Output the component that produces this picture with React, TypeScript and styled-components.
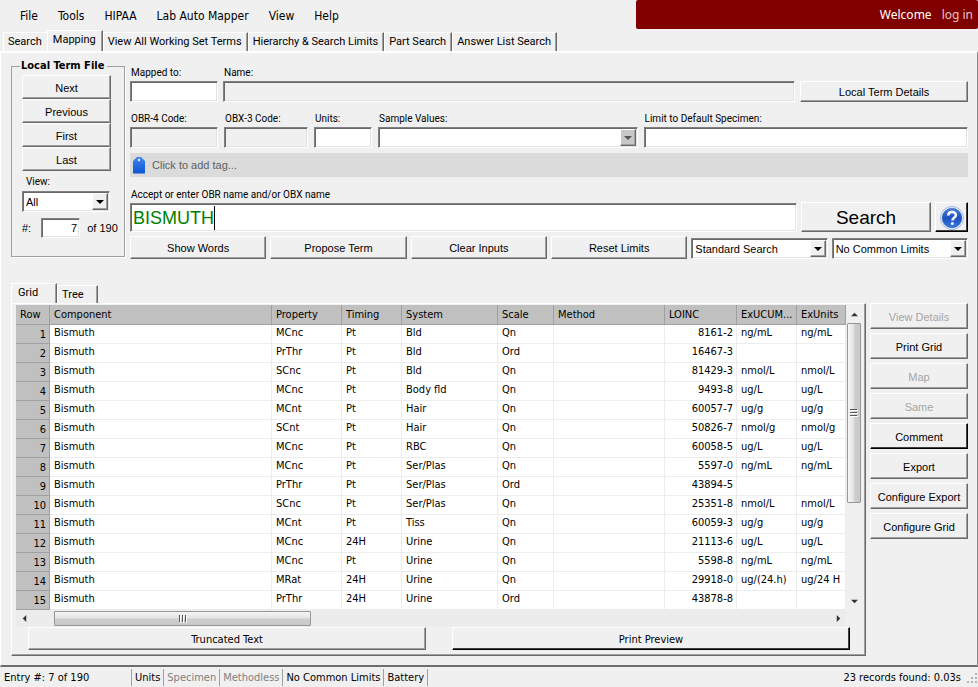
import React from "react";
import styled, { createGlobalStyle, css } from "styled-components";

const tahoma = `"DejaVu Sans Condensed", "Noto Sans", sans-serif`;
const arial = `"Liberation Sans", Arial, sans-serif`;
const narrow = `Roboto, "Liberation Sans", sans-serif`;

const GlobalStyle = createGlobalStyle`
  * { box-sizing: border-box; }
  body { margin: 0; background: #f0f0f0; color: #000; font-family: ${tahoma}; font-size: 11px; }
  button, input, select { font: inherit; color: inherit; margin: 0; border-radius: 0; }
`;

const raised = css`
  border: 1px solid;
  border-color: #fff #696969 #696969 #fff;
  box-shadow: inset -1px -1px #a0a0a0;
`;

const sunken = css`
  border: 1px solid;
  border-color: #808080 #fff #fff #808080;
  box-shadow: inset 1px 1px #696969, inset -1px -1px #e3e3e3;
`;

const Page = styled.div`
  display: flex;
  flex-direction: column;
  min-height: 100vh;
`;

const TopBar = styled.header`
  display: flex;
  justify-content: space-between;
  align-items: flex-start;
`;

const Menu = styled.nav`
  display: flex;
  gap: 20px;
  padding: 7px 0 0 20px;
`;

const MenuItem = styled.button`
  border: 0;
  padding: 0;
  background: none;
  font-family: ${tahoma};
  font-size: 12px;
  line-height: 18px;
`;

const Banner = styled.div`
  display: flex;
  justify-content: flex-end;
  gap: 10px;
  width: 35%;
  height: 29px;
  padding-right: 5px;
  border-radius: 2px;
  background: #800000;
  color: #fff;
  font: 12px/30px "Noto Sans", sans-serif;
`;

const LoginLink = styled.a`
  color: #e0c4c4;
  text-decoration: none;
`;

const TabStrip = styled.div`
  display: flex;
  align-items: flex-end;
  height: 22px;
  padding-left: 3px;
`;

const Tab = styled.button<{ $active?: boolean; $open?: boolean }>`
  height: ${(p) => (p.$active ? 21 : 19)}px;
  padding: ${(p) => (p.$active ? "0 6px 2px 5px" : "0 5px 0 4px")};
  border: solid;
  border-width: 1px ${(p) => (p.$open ? 0 : 1)}px 0 1px;
  border-color: #fff #696969 #fff #fff;
  box-shadow: ${(p) => (p.$open ? "none" : "inset -1px 0 #a0a0a0")};
  background: #f0f0f0;
  font-family: ${narrow};
  font-size: 11px;
  line-height: 16px;
  white-space: nowrap;
`;

const MainPanel = styled.main`
  flex: 1;
  display: flex;
  flex-direction: column;
  border: solid;
  border-width: 2px 1px 2px 1px;
  border-color: #fff #8a8a8a #6d6d6d #fff;
  padding: 5px 9px 9px 10px;
`;

const FormArea = styled.div`
  display: flex;
  gap: 5px;
`;

const TermFile = styled.fieldset`
  flex: none;
  width: 114px;
  height: 199px;
  margin: 0;
  padding: 1px 0 0 10px;
  border: 1px solid #a0a0a0;
  box-shadow: 1px 1px #fff;
`;

const TermLegend = styled.legend`
  padding: 0 3px 0 1px;
  margin-left: -2px;
  font: bold 11px/16px ${tahoma};
`;

const NavButtons = styled.div`
  display: flex;
  flex-direction: column;
  width: 89px;
`;

const PushButton = styled.button<{ $h?: number; $strong?: boolean; $size?: number; $face?: string }>`
  ${raised}
  height: ${(p) => p.$h ?? 23}px;
  padding: 1px 0 0;
  background: #f0f0f0;
  font-family: ${(p) => p.$face ?? arial};
  font-size: ${(p) => p.$size ?? 11}px;
  white-space: nowrap;
  ${(p) => p.$strong && "border-right-color: #000; border-bottom-color: #000; box-shadow: inset -1px -1px #404040;"}
  &:disabled { color: #a5a5a5; }
`;

const SmallLabel = styled.label`
  display: block;
  font: 10px/12px ${narrow};
  padding-left: 1px;
  white-space: nowrap;
`;

const ViewField = styled.div`
  width: 88px;
  padding-top: 5px;
`;

const ViewLabel = styled(SmallLabel)`
  padding: 0 0 3px 4px;
`;

const CountRow = styled.div`
  display: flex;
  align-items: center;
  padding-top: 6px;
  font: 11px/18px ${arial};
  white-space: nowrap;
`;

const CountInput = styled.input`
  ${sunken}
  width: 39px;
  height: 20px;
  margin: 0 7px 0 10px;
  padding: 0 2px;
  background: #fff;
  text-align: right;
`;

const Fields = styled.div`
  flex: 1;
  min-width: 0;
  display: flex;
  flex-direction: column;
  padding-top: 9px;
`;

const FieldRow = styled.div<{ $cols: string; $gap: number; $top: number }>`
  display: grid;
  grid-template-columns: ${(p) => p.$cols};
  column-gap: ${(p) => p.$gap}px;
  padding-top: ${(p) => p.$top}px;
  align-items: end;
`;

const Field = styled.div`
  min-width: 0;
`;

const FieldLabel = styled(SmallLabel)`
  padding-bottom: 2px;
`;

const TextInput = styled.input`
  ${sunken}
  display: block;
  width: 100%;
  height: 21px;
  padding: 0 2px;
  background: #fff;
  &:read-only { background: #f0f0f0; }
`;

const SelectFrame = styled.div`
  position: relative;
  ${sunken}
  height: 21px;
  padding: 2px 1px 1px 2px;
  background: #fff;
`;

const SelectInput = styled.select`
  appearance: none;
  display: block;
  width: 100%;
  height: 16px;
  padding: 0 18px 0 1px;
  border: 0;
  background: #fff;
  font: 11px/16px ${arial};
`;

const SelectArrow = styled.span<{ $muted?: boolean }>`
  ${raised}
  position: absolute;
  top: 1px;
  right: 1px;
  width: 16px;
  height: 17px;
  display: flex;
  align-items: center;
  justify-content: center;
  background: ${(p) => (p.$muted ? "#c8c8c8" : "#f0f0f0")};
  color: ${(p) => (p.$muted ? "#555" : "#000")};
  pointer-events: none;
`;

const TagBar = styled.button`
  display: flex;
  align-items: center;
  gap: 7px;
  height: 24px;
  margin-top: 5px;
  padding: 0 3px;
  border: 0;
  background: #dbdbdb;
  color: #606060;
  font: 11px/24px ${arial};
`;

const NameBox = styled.div`
  ${sunken}
  display: flex;
  align-items: center;
  height: 29px;
  padding-left: 2px;
  background: #fff;
`;

const NameInput = styled.input`
  field-sizing: content;
  min-width: 4px;
  padding: 0;
  border: 0;
  outline: 0;
  background: none;
  color: #008000;
  caret-color: transparent;
  font: 18px/24px ${arial};
`;

const Caret = styled.span`
  width: 1px;
  height: 24px;
  background: #000;
`;

const HelpButton = styled(PushButton)`
  display: flex;
  align-items: center;
  justify-content: center;
`;

const Results = styled.div`
  flex: 1;
  display: flex;
  gap: 4px;
  padding-top: 24px;
`;

const ResultsLeft = styled.div`
  flex: 1;
  min-width: 0;
  display: flex;
  flex-direction: column;
`;

const GridTabs = styled(TabStrip)`
  height: 20px;
  padding-left: 0;
`;

const GridTab = styled(Tab)`
  height: ${(p) => (p.$active ? 20 : 18)}px;
  padding: ${(p) => (p.$active ? "0 18px 2px 6px" : "0 13px 0 4px")};
`;

const GridPanel = styled.section`
  flex: 1;
  border: 1px solid;
  border-color: #fff #696969 #696969 #fff;
  box-shadow: inset -1px -1px #a0a0a0;
  padding: 1px 3px 4px 4px;
`;

const TableArea = styled.div`
  display: flex;
`;

const DataTable = styled.table`
  flex: 1;
  width: 100%;
  min-width: 0;
  table-layout: fixed;
  border-collapse: separate;
  border-spacing: 0;
  background: #fff;
  line-height: 16px;
`;

const Col = styled.col<{ $w?: number }>`
  width: ${(p) => (p.$w ? `${p.$w}px` : "auto")};
`;

const HeadCell = styled.th`
  height: 20px;
  padding: 0 0 0 4px;
  border: solid #a0a0a0;
  border-width: 0 1px 1px 0;
  background: #c0c0c0;
  font-weight: normal;
  text-align: left;
  white-space: nowrap;
`;

const RowHead = styled.th`
  height: 19px;
  padding: 2px 3px 0 0;
  border: solid #a0a0a0;
  border-width: 0 1px 1px 0;
  background: #c0c0c0;
  font-weight: normal;
  text-align: right;
`;

const Cell = styled.td<{ $right?: boolean }>`
  height: 19px;
  padding: 0 3px 2px 4px;
  border: solid #ececec;
  border-width: 0 1px 1px 0;
  text-align: ${(p) => (p.$right ? "right" : "left")};
  white-space: nowrap;
`;

const ScrollV = styled.div`
  flex: none;
  display: flex;
  flex-direction: column;
  align-items: center;
  width: 16px;
  background: #efefef;
`;

const ScrollH = styled.div`
  display: flex;
  align-items: center;
  height: 17px;
  margin-right: 16px;
  background: #ececec;
`;

const ArrowCell = styled.span`
  flex: none;
  width: 16px;
  height: 18px;
  display: flex;
  align-items: center;
  justify-content: center;
  color: #333;
`;

const ThumbV = styled.div`
  display: flex;
  align-items: center;
  justify-content: center;
  width: 14px;
  height: 180px;
  margin-bottom: auto;
  border: 1px solid #979797;
  border-radius: 1px;
  background: linear-gradient(90deg, #f5f5f5, #e3e3e3 48%, #cfcfcf 52%, #c8c8cc);
`;

const ThumbH = styled.div`
  display: flex;
  align-items: center;
  justify-content: center;
  width: 31%;
  height: 15px;
  margin: 0 auto 0 22px;
  border: 1px solid #979797;
  border-radius: 1px;
  background: linear-gradient(#f5f5f5, #e3e3e3 48%, #cfcfcf 52%, #c8c8cc);
`;

const GridActions = styled.div`
  display: grid;
  grid-template-columns: 1fr 1fr;
  gap: 26px;
  padding: 0 12px;
`;

const SideActions = styled.div`
  flex: none;
  display: flex;
  flex-direction: column;
  gap: 4px;
  width: 98px;
  padding-top: 20px;
`;

const StatusBar = styled.footer`
  display: flex;
  align-items: center;
  height: 20px;
  padding: 1px 0 0 1px;
  line-height: 18px;
`;

const StatusItem = styled.span<{ $w?: number; $dim?: boolean }>`
  height: 17px;
  width: ${(p) => (p.$w ? `${p.$w}px` : "auto")};
  padding: 0 3px;
  border-right: 1px solid #a0a0a0;
  color: ${(p) => (p.$dim ? "#808080" : "#000")};
  white-space: nowrap;
`;

const StatusResult = styled.span`
  margin-left: auto;
  padding-right: 5px;
`;

type Dir = "up" | "down" | "left" | "right";
const arrowPaths: Record<Dir, string> = {
  up: "M0 6 4 2 8 6z",
  down: "M0 2h8L4 6z",
  left: "M6 0v8L2 4z",
  right: "M2 0v8l4-4z",
};

const Arrow = ({ dir, size = 7 }: { dir: Dir; size?: number }) => (
  <svg width={size} height={size} viewBox="0 0 8 8" aria-hidden="true">
    <path d={arrowPaths[dir]} fill="currentColor" />
  </svg>
);

const GripV = () => (
  <svg width="8" height="8" viewBox="0 0 8 8" aria-hidden="true">
    <path d="M0 .5h7M0 3.5h7M0 6.5h7" stroke="#555" />
    <path d="M1 1.5h7M1 4.5h7M1 7.5h7" stroke="#fff" />
  </svg>
);

const GripH = () => (
  <svg width="8" height="8" viewBox="0 0 8 8" aria-hidden="true">
    <path d="M.5 0v7M3.5 0v7M6.5 0v7" stroke="#555" />
    <path d="M1.5 1v7M4.5 1v7M7.5 1v7" stroke="#fff" />
  </svg>
);

const TagIcon = () => (
  <svg width="12" height="17" viewBox="0 0 12 17" aria-hidden="true">
    <defs>
      <linearGradient id="tagBlue" x1="0" y1="0" x2="0" y2="1">
        <stop offset="0" stopColor="#4186ee" />
        <stop offset="1" stopColor="#0b55d0" />
      </linearGradient>
    </defs>
    <path d="M4 0h4l4 4v12.500H0V4z" fill="url(#tagBlue)" />
    <circle cx="6" cy="3" r="1.300" fill="#dfeaff" />
  </svg>
);

const HelpIcon = () => (
  <svg width="24" height="24" viewBox="0 0 24 24" aria-hidden="true">
    <defs>
      <linearGradient id="helpBlue" x1="0" y1="0" x2="0" y2="1">
        <stop offset="0" stopColor="#4a83dd" />
        <stop offset=".5" stopColor="#1c50bd" />
        <stop offset="1" stopColor="#3a7be6" />
      </linearGradient>
    </defs>
    <circle cx="12" cy="12" r="11.500" fill="#f4f8ff" stroke="#9bb6e6" />
    <circle cx="12" cy="12" r="9.800" fill="url(#helpBlue)" stroke="#2450a8" strokeWidth=".6" />
    <path d="M8.300 9.400c0-4.600 7.600-4.500 7.600-.3 0 2.700-3.500 2.700-3.500 5.400" fill="none" stroke="#fff" strokeWidth="2.500" />
    <circle cx="12.300" cy="17.500" r="1.500" fill="#fff" />
  </svg>
);

const SizeGrip = () => (
  <svg width="12" height="12" viewBox="0 0 12 12" aria-hidden="true">
    <path
      d="M9 1h2v2H9zM9 5h2v2H9zM9 9h2v2H9zM5 5h2v2H5zM5 9h2v2H5zM1 9h2v2H1z"
      fill="#b4b4b4"
    />
  </svg>
);

const Dropdown = ({ id, label, value, muted }: { id: string; label?: string; value?: string; muted?: boolean }) => (
  <SelectFrame>
    <SelectInput id={id} aria-label={label} defaultValue={value ?? ""}>
      <option value={value ?? ""}>{value ?? ""}</option>
    </SelectInput>
    <SelectArrow $muted={muted}>
      <Arrow dir="down" size={8} />
    </SelectArrow>
  </SelectFrame>
);

const LabeledInput = ({ id, label, readOnly }: { id: string; label: string; readOnly?: boolean }) => (
  <Field>
    <FieldLabel htmlFor={id}>{label}</FieldLabel>
    <TextInput id={id} type="text" readOnly={readOnly} />
  </Field>
);

const menus = ["File", "Tools", "HIPAA", "Lab Auto Mapper", "View", "Help"];
const tabs = ["Search", "Mapping", "View All Working Set Terms", "Hierarchy & Search Limits", "Part Search", "Answer List Search"];
const columns: [string, number?][] = [
  ["Row", 34], ["Component"], ["Property", 70], ["Timing", 60], ["System", 96],
  ["Scale", 56], ["Method", 111], ["LOINC", 72], ["ExUCUM...", 60], ["ExUnits", 49],
];
const rows = [
  ["MCnc", "Pt", "Bld", "Qn", "8161-2", "ng/mL", "ng/mL"],
  ["PrThr", "Pt", "Bld", "Ord", "16467-3", "", ""],
  ["SCnc", "Pt", "Bld", "Qn", "81429-3", "nmol/L", "nmol/L"],
  ["MCnc", "Pt", "Body fld", "Qn", "9493-8", "ug/L", "ug/L"],
  ["MCnt", "Pt", "Hair", "Qn", "60057-7", "ug/g", "ug/g"],
  ["SCnt", "Pt", "Hair", "Qn", "50826-7", "nmol/g", "nmol/g"],
  ["MCnc", "Pt", "RBC", "Qn", "60058-5", "ug/L", "ug/L"],
  ["MCnc", "Pt", "Ser/Plas", "Qn", "5597-0", "ng/mL", "ng/mL"],
  ["PrThr", "Pt", "Ser/Plas", "Ord", "43894-5", "", ""],
  ["SCnc", "Pt", "Ser/Plas", "Qn", "25351-8", "nmol/L", "nmol/L"],
  ["MCnt", "Pt", "Tiss", "Qn", "60059-3", "ug/g", "ug/g"],
  ["MCnc", "24H", "Urine", "Qn", "21113-6", "ug/L", "ug/L"],
  ["MCnc", "Pt", "Urine", "Qn", "5598-8", "ng/mL", "ng/mL"],
  ["MRat", "24H", "Urine", "Qn", "29918-0", "ug/(24.h)", "ug/24 H"],
  ["PrThr", "24H", "Urine", "Ord", "43878-8", "", ""],
];
const sideActions = [
  { label: "View Details", disabled: true },
  { label: "Print Grid" },
  { label: "Map", disabled: true },
  { label: "Same", disabled: true },
  { label: "Comment", strong: true },
  { label: "Export" },
  { label: "Configure Export" },
  { label: "Configure Grid" },
];

export default function App() {
  const [name, setName] = React.useState("BISMUTH");
  return (
    <Page>
      <GlobalStyle />
      <TopBar>
        <Menu>
          {menus.map((m) => (
            <MenuItem key={m}>{m}</MenuItem>
          ))}
        </Menu>
        <Banner>
          <span>Welcome</span>
          <LoginLink href="#login">log in</LoginLink>
        </Banner>
      </TopBar>
      <TabStrip role="tablist">
        {tabs.map((t) => (
          <Tab key={t} role="tab" aria-selected={t === "Mapping"} $active={t === "Mapping"} $open={t === "Search"}>{t}</Tab>
        ))}
      </TabStrip>
      <MainPanel>
        <FormArea>
          <TermFile>
            <TermLegend>Local Term File</TermLegend>
            <NavButtons>
              {["Next", "Previous", "First", "Last"].map((b) => (
                <PushButton key={b} $h={24}>{b}</PushButton>
              ))}
            </NavButtons>
            <ViewField>
              <ViewLabel htmlFor="view">View:</ViewLabel>
              <Dropdown id="view" value="All" />
            </ViewField>
            <CountRow>
              <label htmlFor="entry">#:</label>
              <CountInput id="entry" type="text" defaultValue="7" />
              <span>of 190</span>
            </CountRow>
          </TermFile>
          <Fields>
            <FieldRow $cols="88px 1fr 168px" $gap={5} $top={0}>
              <LabeledInput id="mapped" label="Mapped to:" />
              <LabeledInput id="name" label="Name:" readOnly />
              <PushButton $h={21}>Local Term Details</PushButton>
            </FieldRow>
            <FieldRow $cols="88px 84px 58px 260fr 325fr" $gap={6} $top={11}>
              <LabeledInput id="obr" label="OBR-4 Code:" readOnly />
              <LabeledInput id="obx" label="OBX-3 Code:" readOnly />
              <LabeledInput id="units" label="Units:" />
              <Field>
                <FieldLabel htmlFor="samples">Sample Values:</FieldLabel>
                <Dropdown id="samples" muted />
              </Field>
              <LabeledInput id="specimen" label="Limit to Default Specimen:" />
            </FieldRow>
            <TagBar>
              <TagIcon />
              Click to add tag...
            </TagBar>
            <FieldRow $cols="1fr 130px 33px" $gap={4} $top={12}>
              <Field>
                <FieldLabel htmlFor="obname">Accept or enter OBR name and/or OBX name</FieldLabel>
                <NameBox>
                  <NameInput id="obname" type="text" value={name} onChange={(e) => setName(e.target.value)} />
                  <Caret />
                </NameBox>
              </Field>
              <PushButton $h={30} $size={19}>Search</PushButton>
              <HelpButton $h={30} $strong aria-label="Help"><HelpIcon /></HelpButton>
            </FieldRow>
            <FieldRow $cols="repeat(6, 1fr)" $gap={4} $top={4}>
              <PushButton>Show Words</PushButton>
              <PushButton>Propose Term</PushButton>
              <PushButton>Clear Inputs</PushButton>
              <PushButton>Reset Limits</PushButton>
              <Dropdown id="mode" label="Search mode" value="Standard Search" />
              <Dropdown id="limits" label="Common limits" value="No Common Limits" />
            </FieldRow>
          </Fields>
        </FormArea>
        <Results>
          <ResultsLeft>
            <GridTabs role="tablist">
              <GridTab role="tab" aria-selected $active>Grid</GridTab>
              <GridTab role="tab">Tree</GridTab>
            </GridTabs>
            <GridPanel>
              <TableArea>
                <DataTable>
                  <colgroup>
                    {columns.map(([c, w]) => <Col key={c} $w={w} />)}
                  </colgroup>
                  <thead>
                    <tr>{columns.map(([c]) => <HeadCell key={c} scope="col">{c}</HeadCell>)}</tr>
                  </thead>
                  <tbody>
                    {rows.map(([property, timing, system, scale, loinc, ucum, units], i) => (
                      <tr key={loinc}>
                        <RowHead scope="row">{i + 1}</RowHead>
                        <Cell>Bismuth</Cell>
                        <Cell>{property}</Cell>
                        <Cell>{timing}</Cell>
                        <Cell>{system}</Cell>
                        <Cell>{scale}</Cell>
                        <Cell />
                        <Cell $right>{loinc}</Cell>
                        <Cell>{ucum}</Cell>
                        <Cell>{units}</Cell>
                      </tr>
                    ))}
                  </tbody>
                </DataTable>
                <ScrollV>
                  <ArrowCell><Arrow dir="up" /></ArrowCell>
                  <ThumbV><GripV /></ThumbV>
                  <ArrowCell><Arrow dir="down" /></ArrowCell>
                </ScrollV>
              </TableArea>
              <ScrollH>
                <ArrowCell><Arrow dir="left" /></ArrowCell>
                <ThumbH><GripH /></ThumbH>
                <ArrowCell><Arrow dir="right" /></ArrowCell>
              </ScrollH>
              <GridActions>
                <PushButton $face={tahoma}>Truncated Text</PushButton>
                <PushButton $face={tahoma} $strong>Print Preview</PushButton>
              </GridActions>
            </GridPanel>
          </ResultsLeft>
          <SideActions>
            {sideActions.map((a) => (
              <PushButton key={a.label} $h={26} disabled={a.disabled} $strong={a.strong}>{a.label}</PushButton>
            ))}
          </SideActions>
        </Results>
      </MainPanel>
      <StatusBar>
        <StatusItem $w={131}>Entry #: 7 of 190</StatusItem>
        <StatusItem>Units</StatusItem>
        <StatusItem $dim>Specimen</StatusItem>
        <StatusItem $dim>Methodless</StatusItem>
        <StatusItem>No Common Limits</StatusItem>
        <StatusItem>Battery</StatusItem>
        <StatusResult>23 records found: 0.03s</StatusResult>
        <SizeGrip />
      </StatusBar>
    </Page>
  );
}
